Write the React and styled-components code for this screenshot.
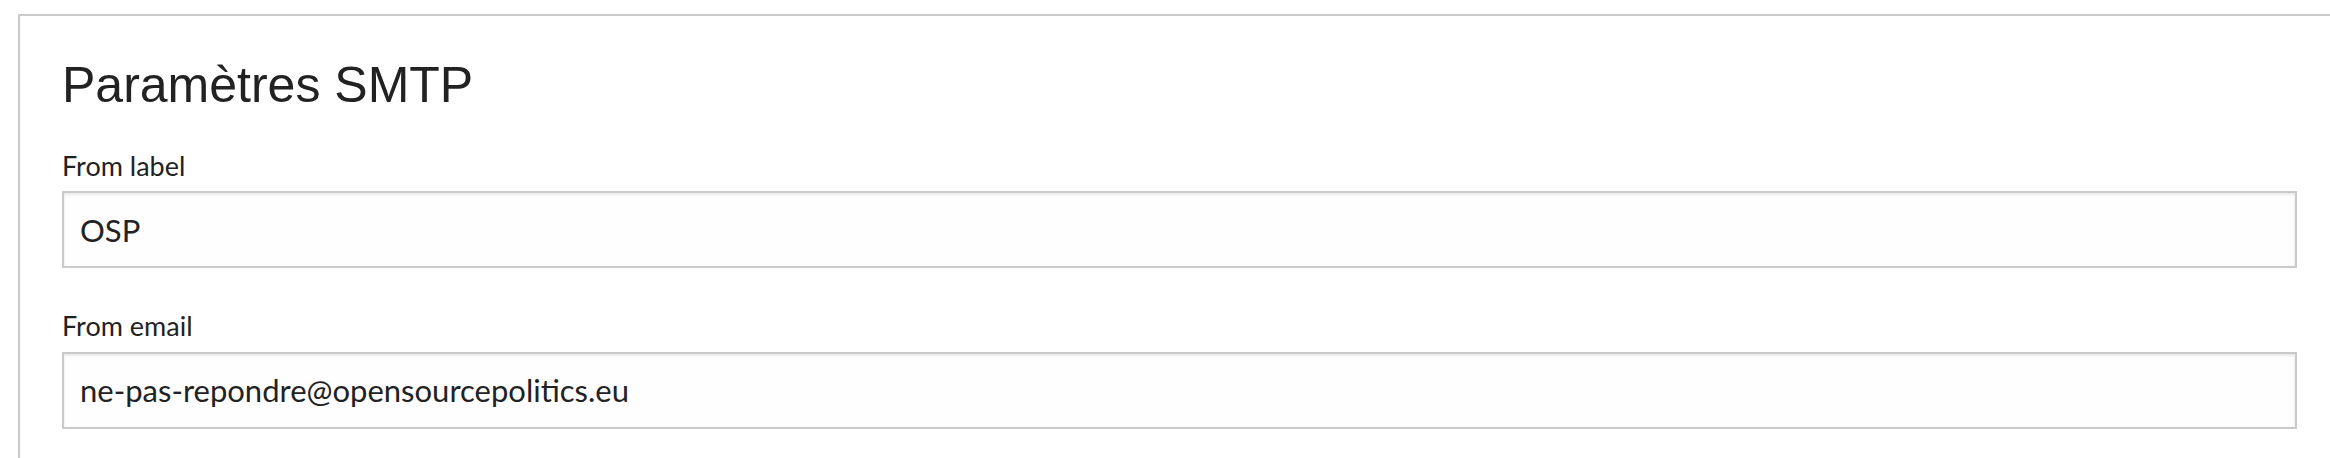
import React from 'react';
import styled, { createGlobalStyle } from 'styled-components';

const GlobalStyle = createGlobalStyle`
    html, body {
        margin: 0;
        padding: 0;
        background: #ffffff;
        overflow: hidden;
    }
`;

const Page = styled.div`
    box-sizing: border-box;
    height: 100vh;
    overflow: hidden;
    padding: 14px 0 0 18px;
`;

const Card = styled.section`
    background: #ffffff;
    border: 2px solid #cacaca;
    margin-right: -11px;
    padding: 39px 42px 40px;
`;

const Title = styled.h2`
    margin: 0 0 35px;
    font-family: "Liberation Sans", Arial, sans-serif;
    font-weight: 400;
    font-size: 50px;
    line-height: 1.2;
    color: #222222;
`;

const Field = styled.div`
    margin-bottom: ${(p) => (p.$last ? '0' : '42px')};
`;

const Label = styled.label`
    display: block;
    margin-bottom: 9px;
    font-family: Lato, "Open Sans", sans-serif;
    font-size: 27px;
    line-height: 1.2;
    color: #222222;
`;

const Input = styled.input`
    display: block;
    box-sizing: border-box;
    width: 100%;
    height: 77px;
    margin: 0;
    padding: 0 16px;
    border: 2px solid #cacaca;
    border-radius: 0;
    background: #fefefe;
    box-shadow: inset 0 1.5px 3px rgba(10, 10, 10, 0.1);
    font-family: Lato, "Open Sans", sans-serif;
    font-size: 31px;
    color: #222222;
    outline: none;
`;

const fields = [
    { id: 'from_label', label: 'From label', value: 'OSP' },
    { id: 'from_email', label: 'From email', value: 'ne-pas-repondre@opensourcepolitics.eu' },
];

const App = () => {
    return (
        <>
            <GlobalStyle />
            <Page>
                <Card>
                    <Title>Paramètres SMTP</Title>
                    {fields.map((field, index) => (
                        <Field key={field.id} $last={index === fields.length - 1}>
                            <Label htmlFor={field.id}>{field.label}</Label>
                            <Input id={field.id} type="text" defaultValue={field.value} readOnly />
                        </Field>
                    ))}
                </Card>
            </Page>
        </>
    );
};

export default App;
